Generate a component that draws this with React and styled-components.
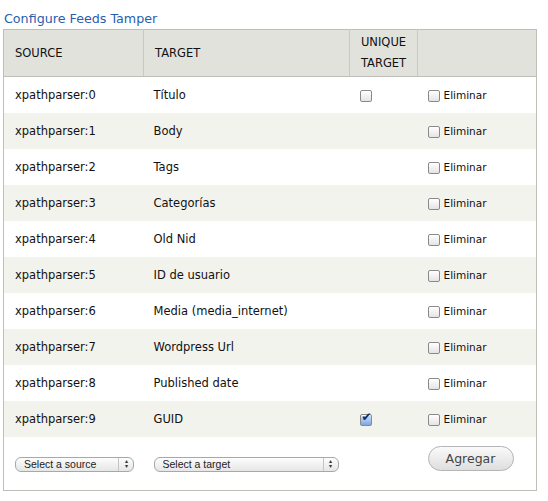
import React from "react";
import styled, { createGlobalStyle } from "styled-components";

const GlobalStyle = createGlobalStyle`
  body {
    margin: 0;
    background: #fff;
    font-family: "Lucida Grande", "DejaVu Sans", Verdana, sans-serif;
    color: #222;
  }
`;

const rows = [
  { source: "xpathparser:0", target: "Título", unique: "empty" },
  { source: "xpathparser:1", target: "Body" },
  { source: "xpathparser:2", target: "Tags" },
  { source: "xpathparser:3", target: "Categorías" },
  { source: "xpathparser:4", target: "Old Nid" },
  { source: "xpathparser:5", target: "ID de usuario" },
  { source: "xpathparser:6", target: "Media (media_internet)" },
  { source: "xpathparser:7", target: "Wordpress Url" },
  { source: "xpathparser:8", target: "Published date" },
  { source: "xpathparser:9", target: "GUID", unique: "checked" },
];

export default function App() {
  return (
    <Page>
      <GlobalStyle />
      <Title>Configure Feeds Tamper</Title>
      <Table>
        <colgroup>
          <col style={{ width: 140 }} />
          <col style={{ width: 206 }} />
          <col style={{ width: 68 }} />
          <col />
        </colgroup>
        <thead>
          <tr>
            <Th>SOURCE</Th>
            <Th>TARGET</Th>
            <Th $center>UNIQUE<br />TARGET</Th>
            <Th />
          </tr>
        </thead>
        <tbody>
          {rows.map((r, i) => (
            <Row key={i} $even={i % 2 === 1}>
              <Td $pad={11}>{r.source}</Td>
              <Td $pad={10}>{r.target}</Td>
              <Td $pad={10}>
                {r.unique && <Check $checked={r.unique === "checked"} />}
              </Td>
              <Td $pad={10}>
                <Remove>
                  <Check />
                  <span>Eliminar</span>
                </Remove>
              </Td>
            </Row>
          ))}
          <FooterRow>
            <Td $pad={11}>
              <Select $w={119}>
                <span>Select a source</span>
                <Arrows>▴<br />▾</Arrows>
              </Select>
            </Td>
            <Td $pad={10}>
              <Select $w={185}>
                <span>Select a target</span>
                <Arrows>▴<br />▾</Arrows>
              </Select>
            </Td>
            <Td />
            <Td $pad={10} $top>
              <Button>Agregar</Button>
            </Td>
          </FooterRow>
        </tbody>
      </Table>
    </Page>
  );
}

const Page = styled.div`
  padding: 10px 12px 0 3px;
  width: 534px;
`;

const Title = styled.h2`
  margin: 0 0 2px 1px;
  font-size: 12.7px;
  font-weight: normal;
  color: #2a5db0;
  line-height: 17px;
`;

const Table = styled.table`
  width: 534px;
  border-collapse: collapse;
  border: 1px solid #bebfb9;
  table-layout: fixed;
  font-size: 11.5px;
`;

const Th = styled.th`
  background: #e1e2dc;
  border-right: 1px solid #c8c9c3;
  border-bottom: 1px solid #bebfb9;
  height: 46px;
  padding: 0 ${(p) => (p.$center ? 0 : 11)}px;
  text-align: ${(p) => (p.$center ? "center" : "left")};
  font-weight: normal;
  font-size: 11.5px;
  line-height: 21px;
  color: #111;
  &:last-child { border-right: none; }
`;

const Row = styled.tr`
  background: ${(p) => (p.$even ? "#f3f3ed" : "#fff")};
  height: 36px;
`;

const FooterRow = styled.tr`
  height: 54px;
  background: #fff;
`;

const Td = styled.td`
  padding: ${(p) => (p.$top ? "0 0 10px" : "0")} ${(p) => p.$pad || 0}px;
  text-align: left;
  vertical-align: middle;
  white-space: nowrap;
  color: #111;
  line-height: 14px;
`;

const Check = styled.span`
  display: inline-block;
  width: 10px;
  height: 10px;
  border: 1px solid #8a8a8a;
  border-radius: 2px;
  background: ${(p) =>
    p.$checked
      ? "linear-gradient(#d3e1f8, #7fa6e6)"
      : "linear-gradient(#fff, #e4e4e4)"};
  vertical-align: middle;
  position: relative;
  top: 1px;
  box-shadow: inset 0 1px 0 #fff;
  &::after {
    content: "${(p) => (p.$checked ? "✔" : "")}";
    position: absolute;
    left: 1px;
    top: -5px;
    font-size: 12px;
    color: #1b2a55;
  }
`;

const Remove = styled.span`
  display: inline-flex;
  align-items: center;
  gap: 4px;
  font-size: 10.5px;
  line-height: 14px;
  padding-top: 3px;
  & > span:last-child { position: relative; top: 0px; }
`;

const Select = styled.div`
  width: ${(p) => p.$w}px;
  height: 15px;
  border: 1px solid #a8a8a8;
  border-radius: 6px;
  background: linear-gradient(#fdfdfd, #e6e6e6);
  display: flex;
  align-items: center;
  justify-content: space-between;
  padding: 0 0 0 8px;
  box-sizing: border-box;
  font-family: "Liberation Sans", Arial, sans-serif;
  font-size: 10.5px;
  color: #222;
  margin-top: 2px;
`;

const Arrows = styled.span`
  border-left: 1px solid #c4c4c4;
  height: 100%;
  width: 14px;
  font-size: 6px;
  line-height: 5px;
  text-align: center;
  display: flex;
  flex-direction: column;
  justify-content: center;
  color: #333;
`;

const Button = styled.button`
  width: 86px;
  height: 25px;
  border: 1px solid #b5b5b5;
  border-radius: 13px;
  background: linear-gradient(#fafafa, #dedede);
  font-family: "Lucida Grande", "DejaVu Sans", sans-serif;
  font-size: 12.5px;
  color: #444;
  padding: 0;
`;
